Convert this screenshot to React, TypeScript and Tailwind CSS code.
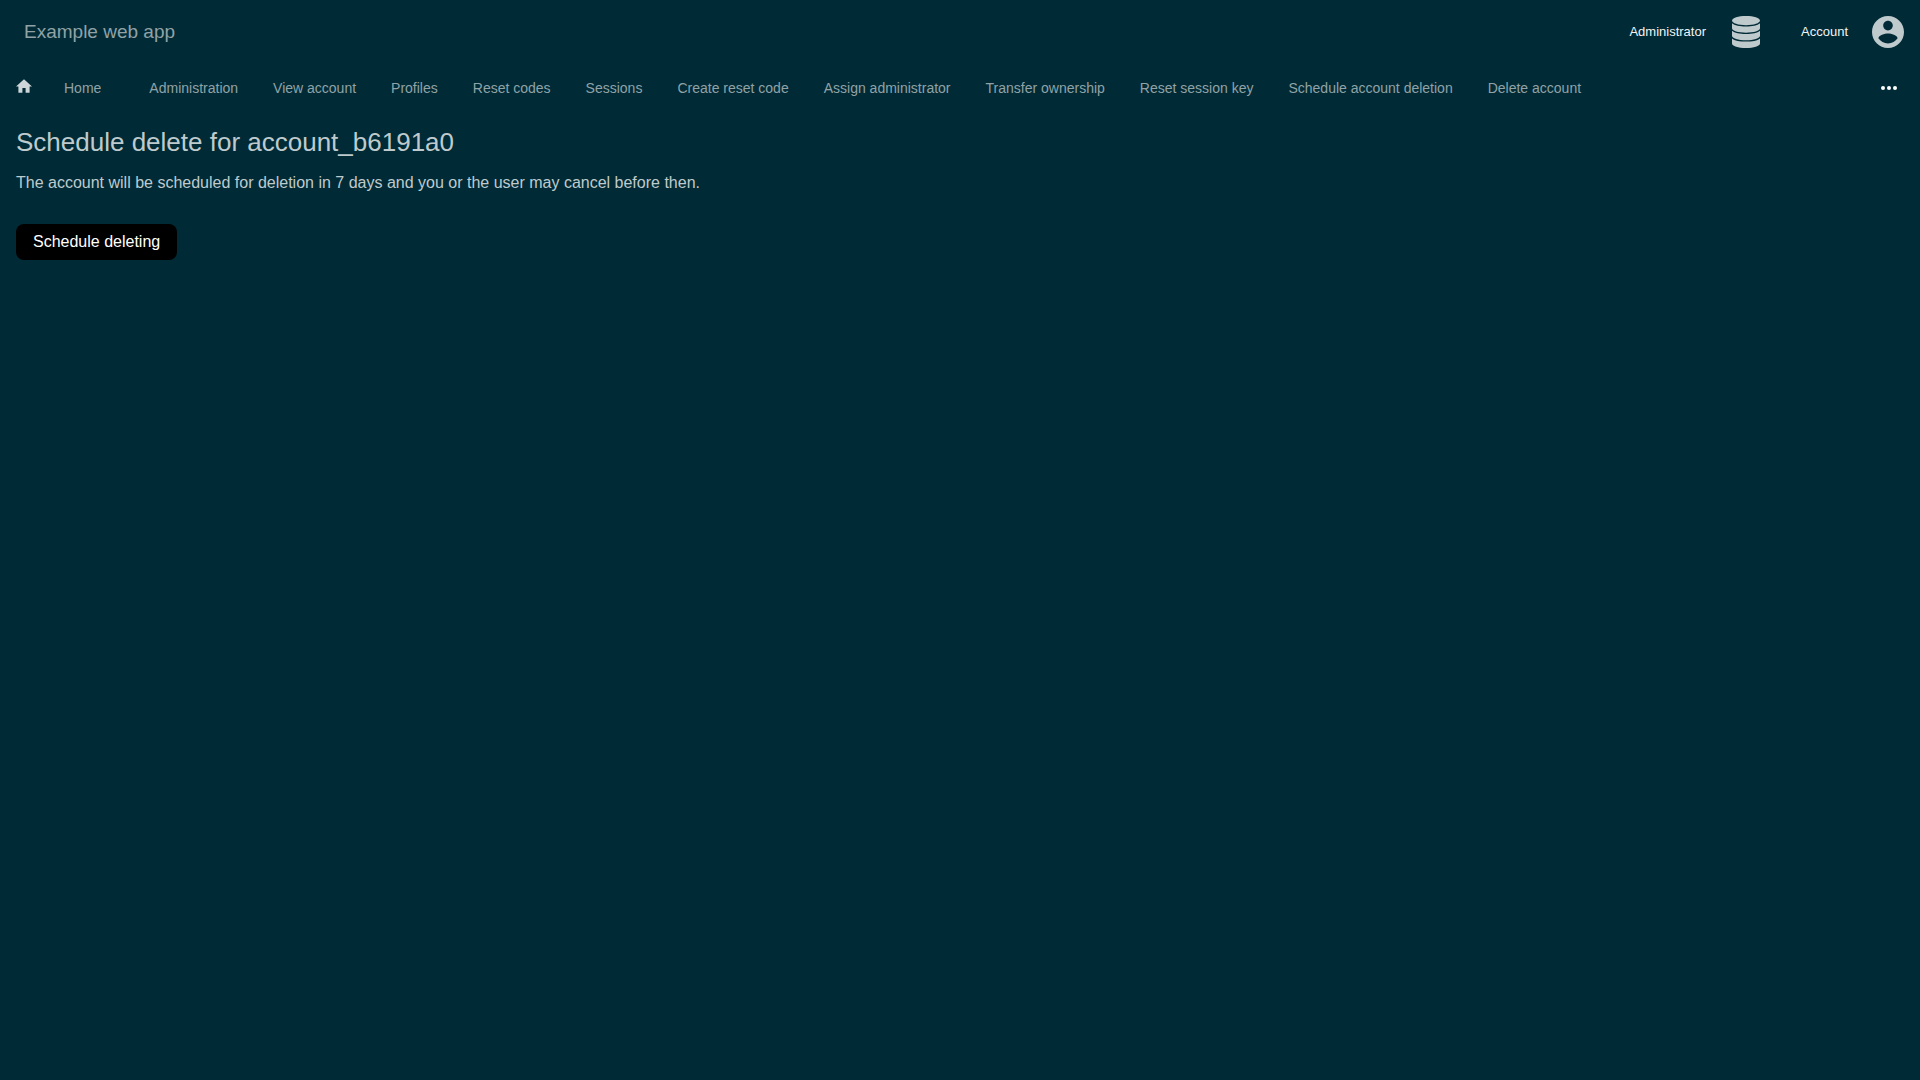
const navLinks = [
  'Administration',
  'View account',
  'Profiles',
  'Reset codes',
  'Sessions',
  'Create reset code',
  'Assign administrator',
  'Transfer ownership',
  'Reset session key',
  'Schedule account deletion',
  'Delete account',
];

function DatabaseIcon() {
  return (
    <svg viewBox="0 0 28 32" className="h-8 w-7" fill="currentColor" aria-hidden="true">
      <path d="M14 0C6.300 0 0 2 0 4.600C0 7.300 6.300 9.300 14 9.300S28 7.300 28 4.600C28 2 21.700 0 14 0z" />
      <path d="M0 7.200C2.500 9.300 7.800 10.500 14 10.500S25.500 9.300 28 7.200V12.300C28 14.800 21.700 16.700 14 16.700S0 14.800 0 12.300z" />
      <path d="M0 14.800C2.500 16.900 7.800 18 14 18S25.500 16.900 28 14.800V19.800C28 22.300 21.700 24.300 14 24.300S0 22.300 0 19.800z" />
      <path d="M0 22.400C2.500 24.500 7.800 25.600 14 25.600S25.500 24.500 28 22.400V27.400C28 30 21.700 32 14 32S0 30 0 27.400z" />
    </svg>
  );
}

function AccountIcon() {
  return (
    <svg viewBox="2 2 20 20" className="size-8" fill="currentColor" aria-hidden="true">
      <path d="M12 2C6.480 2 2 6.480 2 12s4.480 10 10 10 10-4.480 10-10S17.520 2 12 2zm0 3c1.660 0 3 1.340 3 3s-1.340 3-3 3-3-1.340-3-3 1.340-3 3-3zm0 14.200c-2.500 0-4.710-1.280-6-3.220.030-1.990 4-3.080 6-3.080 1.990 0 5.970 1.090 6 3.080-1.290 1.940-3.500 3.220-6 3.220z" />
    </svg>
  );
}

function HomeIcon() {
  return (
    <svg viewBox="2 3 20 17" className="h-[14px] w-4" fill="currentColor" aria-hidden="true">
      <path d="M10 20v-6h4v6h5v-8h3L12 3 2 12h3v8z" />
    </svg>
  );
}

function MoreIcon() {
  return (
    <svg viewBox="4 4 16 16" className="size-4" fill="currentColor" aria-hidden="true">
      <circle cx="6" cy="12" r="2" />
      <circle cx="12" cy="12" r="2" />
      <circle cx="18" cy="12" r="2" />
    </svg>
  );
}

export default function App() {
  return (
    <div className="min-h-screen bg-[#002b36] font-['Liberation_Sans',Arial,sans-serif] text-[#bfcacd]">
      <header className="flex h-16 items-center justify-between pr-4 pl-6">
        <a href="#" className="text-[19px] text-[#91a2a6]">
          Example web app
        </a>
        <div className="flex items-center gap-[41px]">
          <button type="button" className="flex items-center gap-[26px] text-[13px]">
            <span className="text-[#f2f4f5]">Administrator</span>
            <DatabaseIcon />
          </button>
          <button type="button" className="flex items-center gap-6 text-[13px]">
            <span className="text-[#f2f4f5]">Account</span>
            <AccountIcon />
          </button>
        </div>
      </header>

      <nav className="flex h-12 items-center justify-between px-4 text-[14px] text-[#91a2a6]">
        <div className="flex items-center">
          <a href="#" className="mr-12 flex items-center gap-8">
            <span className="pb-1 text-[#ccd5d7]">
              <HomeIcon />
            </span>
            Home
          </a>
          <ul className="flex items-center gap-[35px]">
            {navLinks.map((label) => (
              <li key={label}>
                <a href="#">{label}</a>
              </li>
            ))}
          </ul>
        </div>
        <button type="button" aria-label="More" className="px-[7px] text-white">
          <MoreIcon />
        </button>
      </nav>

      <main className="px-4 pt-3">
        <h1 className="text-[26px] leading-9">Schedule delete for account_b6191a0</h1>
        <p className="mt-[11px] text-base">
          The account will be scheduled for deletion in 7 days and you or the user may cancel before then.
        </p>
        <button type="button" className="mt-[29px] h-9 rounded-lg bg-black px-[17px] text-base text-white">
          Schedule deleting
        </button>
      </main>
    </div>
  );
}
